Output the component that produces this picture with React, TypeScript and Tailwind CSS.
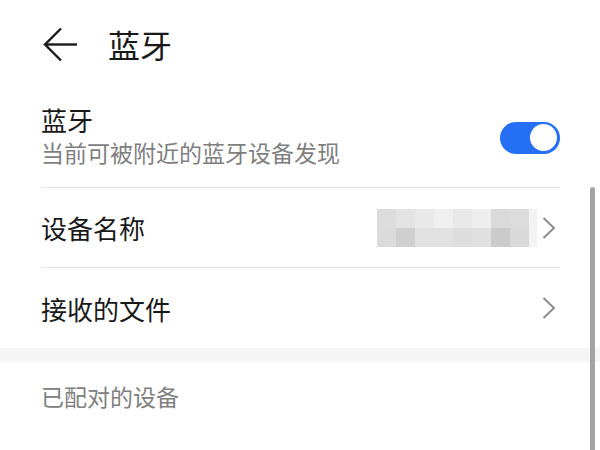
const blurRows = [
  ["#dcdcdc", "#e3e3e3", "#e9e9e9", "#efefef", "#e8e8e8", "#eeeeee", "#dadada", "#dcdcdc"],
  ["#dbdbdb", "#cfcfcf", "#e1e1e1", "#e1e1e1", "#dddddd", "#e0e0e0", "#cbcbcb", "#d9d9d9"],
];

function Chevron() {
  return (
    <svg width="14" height="22" viewBox="0 0 14 22" className="shrink-0">
      <polyline points="1.5,1 12,11 1.5,21" fill="none" stroke="#8c8c8c" strokeWidth="2" />
    </svg>
  );
}

function BlurredName() {
  return (
    <div className="flex flex-col">
      {blurRows.map((row, r) => (
        <div key={r} className="flex">
          {row.map((c, i) => (
            <div key={i} className="w-[19px] h-[19px]" style={{ backgroundColor: c }} />
          ))}
          <div className="w-[8px] h-[19px] bg-[#f3f3f3]" />
        </div>
      ))}
    </div>
  );
}

export default function App() {
  return (
    <div
      className="relative w-[600px] h-[450px] overflow-hidden bg-white text-[#191919]"
      style={{ fontFamily: '"Noto Sans CJK SC", "Noto Sans", sans-serif' }}
    >
      {/* header */}
      <div className="h-[88px] flex items-center pl-[43px]">
        <svg width="35" height="35" viewBox="0 0 35 35">
          <line x1="2" y1="17.5" x2="34" y2="17.5" stroke="#1a1a1a" strokeWidth="2.4" />
          <polyline points="18,1.5 2,17.5 18,33.5" fill="none" stroke="#1a1a1a" strokeWidth="2.4" />
        </svg>
        <span className="ml-[30px] text-[32px] leading-none">蓝牙</span>
      </div>

      <div className="pl-[41px] pr-[40px]">
        {/* bluetooth switch */}
        <div className="h-[100px] flex items-center justify-between border-b border-[#e6e6e6]">
          <div className="flex flex-col -mt-[6px]">
            <span className="text-[26px] leading-[34px]">蓝牙</span>
            <span className="text-[23px] leading-[30px] text-[#7f7f7f]">当前可被附近的蓝牙设备发现</span>
          </div>
          <div className="w-[60px] h-[32px] rounded-full bg-[#256ff5] flex items-center justify-end pr-[3px]">
            <div className="w-[27px] h-[27px] rounded-full bg-white" />
          </div>
        </div>

        {/* device name */}
        <div className="h-[80px] flex items-center justify-between border-b border-[#e6e6e6]">
          <span className="text-[26px]">设备名称</span>
          <div className="flex items-center gap-[5px] mr-[4px]">
            <BlurredName />
            <Chevron />
          </div>
        </div>

        {/* received files */}
        <div className="h-[80px] flex items-center justify-between">
          <span className="text-[26px]">接收的文件</span>
          <div className="mr-[4px]">
            <Chevron />
          </div>
        </div>
      </div>

      <div className="h-[14px] bg-[#f5f5f5]" />

      <div className="pl-[41px] h-[68px] flex items-center">
        <span className="text-[23px] text-[#808080]">已配对的设备</span>
      </div>

      {/* scroll indicator */}
      <div className="absolute right-[5px] top-[187px] bottom-0 w-[5px] rounded-t-full bg-[#a3a3a3]" />
    </div>
  );
}
